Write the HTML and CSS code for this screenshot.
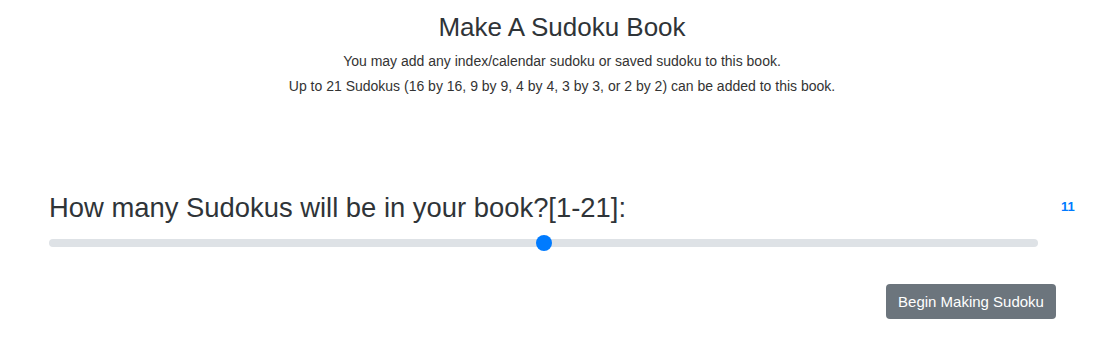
FILE: index.html
```html
<!DOCTYPE html>
<html>
<head>
<meta charset="utf-8">
<link rel="stylesheet" href="styles.css">
</head>
<body>
<header class="intro">
  <h1 class="title">Make A Sudoku Book</h1>
  <p class="note">You may add any index/calendar sudoku or saved sudoku to this book.</p>
  <p class="note">Up to 21 Sudokus (16 by 16, 9 by 9, 4 by 4, 3 by 3, or 2 by 2) can be added to this book.</p>
</header>
<main class="form">
  <div class="field">
    <div class="field-main">
      <label class="question" for="count">How many Sudokus will be in your book?[1-21]:</label>
      <input class="range" id="count" type="range" min="1" max="21" value="11">
    </div>
    <span class="value">11</span>
  </div>
  <div class="actions">
    <button class="btn">Begin Making Sudoku</button>
  </div>
</main>
</body>
</html>
```
FILE: styles.css
```css
html, body {
  margin: 0;
  padding: 0;
  background: #fff;
}
body {
  font-family: "Liberation Sans", Arial, sans-serif;
  color: #333a40;
  width: 1099px;
  height: 357px;
  overflow: hidden;
}
.intro {
  margin-left: 25px;
  text-align: center;
  padding-top: 10px;
}
.title {
  font-size: 26px;
  font-weight: 400;
  line-height: 34px;
  margin: 0 0 7px;
  color: #2f3438;
}
.note {
  font-size: 14px;
  line-height: 20px;
  margin: 0 0 5px;
  color: #333;
}
.form {
  padding: 0 0 0 49px;
  margin-top: 96px;
}
.field {
  display: flex;
  align-items: flex-start;
}
.field-main {
  display: flex;
  flex-direction: column;
  width: 989px;
  flex-shrink: 0;
}
.question {
  font-size: 27.4px;
  line-height: 32px;
  color: #2f3438;
  margin-bottom: 11px;
}
.value {
  margin-left: 23px;
  margin-top: 7px;
  font-size: 13px;
  font-weight: 700;
  color: #007bff;
}
.range {
  -webkit-appearance: none;
  appearance: none;
  width: 100%;
  height: 16px;
  margin: 0;
  padding: 0;
  background: transparent;
}
.range:focus { outline: none; }
.range::-webkit-slider-runnable-track {
  height: 8px;
  background: #dee2e6;
  border-radius: 4px;
}
.range::-webkit-slider-thumb {
  -webkit-appearance: none;
  appearance: none;
  width: 16px;
  height: 16px;
  margin-top: -4px;
  border-radius: 50%;
  background: #007bff;
  border: 0;
}
.actions {
  display: flex;
  justify-content: flex-end;
  margin-top: 33px;
  margin-right: 43px;
}
.btn {
  font-family: "Liberation Sans", Arial, sans-serif;
  font-size: 15px;
  line-height: 21px;
  color: #fff;
  background: #6c757d;
  border: 0;
  border-radius: 4px;
  padding: 7px 12px;
  width: 170px;
  height: 35px;
}
```
